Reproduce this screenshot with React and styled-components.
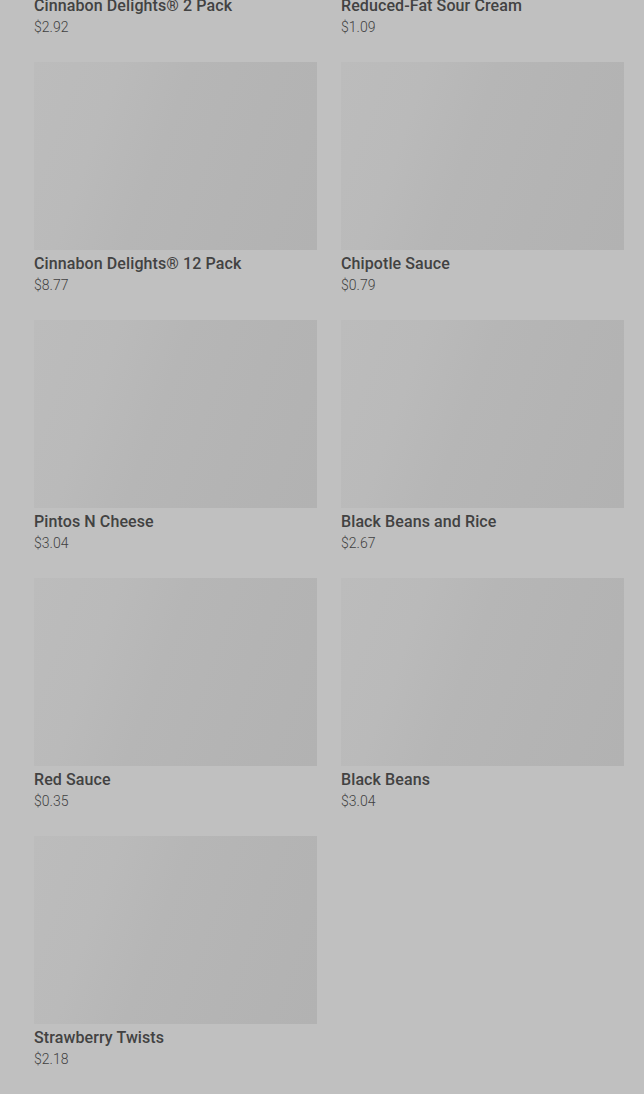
import React from "react";
import styled, { createGlobalStyle } from "styled-components";

const items = [
  { name: "Cinnabon Delights® 2 Pack", price: "$2.92" },
  { name: "Reduced-Fat Sour Cream", price: "$1.09" },
  { name: "Cinnabon Delights® 12 Pack", price: "$8.77" },
  { name: "Chipotle Sauce", price: "$0.79" },
  { name: "Pintos N Cheese", price: "$3.04" },
  { name: "Black Beans and Rice", price: "$2.67" },
  { name: "Red Sauce", price: "$0.35" },
  { name: "Black Beans", price: "$3.04" },
  { name: "Strawberry Twists", price: "$2.18" },
];

const GlobalStyle = createGlobalStyle`
  html, body {
    margin: 0;
    padding: 0;
    background: #c0c0c0;
    overflow: hidden;
  }
  body {
    font-family: Roboto, "Liberation Sans", sans-serif;
  }
`;

const Page = styled.div`
  height: 1094px;
  overflow: hidden;
  background: #c0c0c0;
`;

// page is scrolled: first row image sits above the viewport
const Grid = styled.div`
  display: grid;
  grid-template-columns: 283px 283px;
  column-gap: 24px;
  row-gap: 24px;
  padding: 0 20px 0 34px;
  margin-top: -196px;
`;

const Card = styled.div`
  display: flex;
  flex-direction: column;
`;

const Thumb = styled.div`
  height: 188px;
  background: linear-gradient(
    110deg,
    #bcbcbc 0%,
    #bababa 25%,
    #b6b6b6 45%,
    #b4b4b4 70%,
    #b2b2b2 100%
  );
`;

const Name = styled.div`
  margin-top: 3px;
  font-size: 16px;
  line-height: 21px;
  font-weight: 500;
  color: #424242;
  letter-spacing: 0.1px;
`;

const Price = styled.div`
  font-size: 14px;
  line-height: 22px;
  font-weight: 300;
  color: #404040;
`;

export default function App() {
  return (
    <Page>
      <GlobalStyle />
      <Grid>
        {items.map((item) => (
          <Card key={item.name}>
            <Thumb />
            <Name>{item.name}</Name>
            <Price>{item.price}</Price>
          </Card>
        ))}
      </Grid>
    </Page>
  );
}
